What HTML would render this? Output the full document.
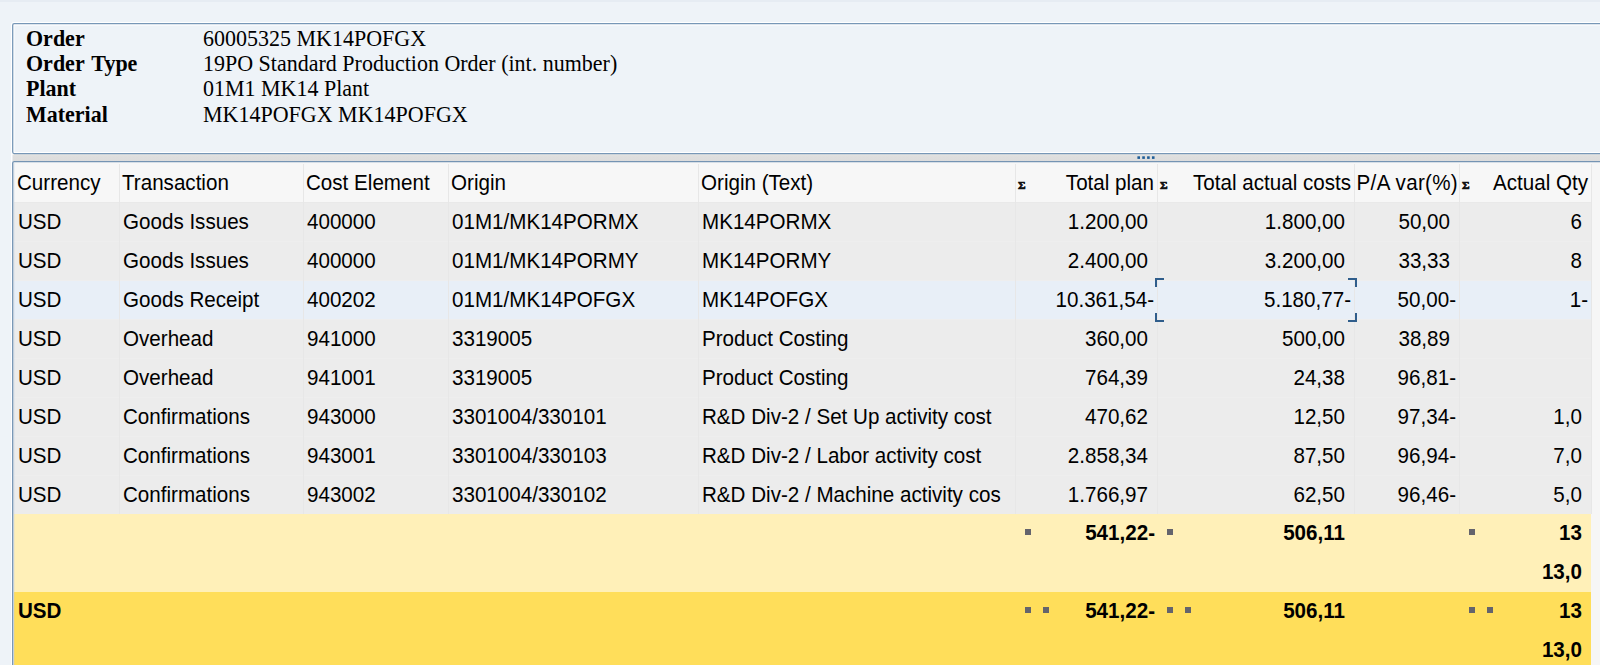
<!DOCTYPE html>
<html><head><meta charset="utf-8"><title>Order</title>
<style>
html,body{margin:0;padding:0}
body{width:1600px;height:665px;overflow:hidden;background:#eef3f8;position:relative;font-family:"Liberation Sans",sans-serif;color:#000}
.abs{position:absolute}
.topstrip{left:0;top:0;width:1600px;height:2px;background:#e6ecf3}
.panel{left:13px;top:24px;width:1600px;height:130px;background:#eef3f8}
.hl{font-family:"Liberation Serif",serif;font-size:22px;line-height:25.4px;white-space:nowrap;transform:scaleY(1.06);transform-origin:0 80%}
.hl b{font-weight:bold;word-spacing:2px}
.split{left:12px;top:154px;width:1600px;height:8px;background:linear-gradient(#e3e2e0 0,#dedede 2px,#dddddd 100%)}
.grid{left:13px;top:162px;width:1600px;height:520px;background:#f7f7f7}
.c{position:absolute;white-space:nowrap;font-size:20.6px;line-height:39px;overflow:hidden;box-sizing:border-box;transform:translateY(0.6px) scaleY(1.045);transform-origin:0 50%}
.r{text-align:right}
.b{font-weight:bold;transform:translateY(-0.4px) scaleY(1.045)}
.row{position:absolute;left:14px;width:1577px;height:39px;background:#ececec}
.vsep{position:absolute;width:1px;background:#e7e7e7}
</style></head><body>
<div class="abs topstrip"></div>
<div class="abs panel"></div>

<div class="abs hl" style="left:26px;top:25.5px"><b>Order</b></div><div class="abs hl" style="left:203px;top:25.5px">60005325 MK14POFGX</div>
<div class="abs hl" style="left:26px;top:50.9px"><b>Order Type</b></div><div class="abs hl" style="left:203px;top:50.9px">19PO Standard Production Order (int. number)</div>
<div class="abs hl" style="left:26px;top:76.3px"><b>Plant</b></div><div class="abs hl" style="left:203px;top:76.3px">01M1 MK14 Plant</div>
<div class="abs hl" style="left:26px;top:101.7px"><b>Material</b></div><div class="abs hl" style="left:203px;top:101.7px">MK14POFGX MK14POFGX</div>
<div class="abs grid"></div>
<div class="abs" style="left:14px;top:162px;width:1586px;height:40px;background:#f7f7f7"></div>
<div class="abs" style="left:14px;top:202px;width:1577px;height:1px;background:#e9e9e9"></div>
<div class="row" style="top:203px;height:38px;background:#ececec"></div>
<div class="abs" style="left:14px;top:241px;width:1577px;height:1px;background:#eeeeee"></div>
<div class="row" style="top:242px;height:38px;background:#ececec"></div>
<div class="abs" style="left:14px;top:280px;width:1577px;height:1px;background:#eeeeee"></div>
<div class="row" style="top:281px;height:38px;background:#e8eff7"></div>
<div class="abs" style="left:14px;top:319px;width:1577px;height:1px;background:#eeeeee"></div>
<div class="row" style="top:320px;height:38px;background:#ececec"></div>
<div class="abs" style="left:14px;top:358px;width:1577px;height:1px;background:#eeeeee"></div>
<div class="row" style="top:359px;height:38px;background:#ececec"></div>
<div class="abs" style="left:14px;top:397px;width:1577px;height:1px;background:#eeeeee"></div>
<div class="row" style="top:398px;height:38px;background:#ececec"></div>
<div class="abs" style="left:14px;top:436px;width:1577px;height:1px;background:#eeeeee"></div>
<div class="row" style="top:437px;height:38px;background:#ececec"></div>
<div class="abs" style="left:14px;top:475px;width:1577px;height:1px;background:#eeeeee"></div>
<div class="row" style="top:476px;height:38px;background:#ececec"></div>
<div class="abs" style="left:1591px;top:162px;width:9px;height:520px;background:#f6f6f6"></div>
<div class="abs" style="left:14px;top:514px;width:1577px;height:78px;background:#fff0b8"></div>
<div class="abs" style="left:14px;top:592px;width:1577px;height:88px;background:#ffde5a"></div>
<div class="vsep" style="left:119px;top:164px;height:350px"></div>
<div class="vsep" style="left:303px;top:164px;height:350px"></div>
<div class="vsep" style="left:448px;top:164px;height:350px"></div>
<div class="vsep" style="left:698px;top:164px;height:350px"></div>
<div class="vsep" style="left:1015px;top:164px;height:350px"></div>
<div class="vsep" style="left:1157px;top:164px;height:350px"></div>
<div class="vsep" style="left:1354px;top:164px;height:350px"></div>
<div class="vsep" style="left:1459px;top:164px;height:350px"></div>
<div class="vsep" style="left:1591px;top:164px;height:350px"></div>
<div class="c" style="left:14px;top:162px;width:105px;padding-left:3px">Currency</div>
<div class="c" style="left:119px;top:162px;width:184px;padding-left:3px">Transaction</div>
<div class="c" style="left:303px;top:162px;width:145px;padding-left:3px">Cost Element</div>
<div class="c" style="left:448px;top:162px;width:250px;padding-left:3px">Origin</div>
<div class="c" style="left:698px;top:162px;width:317px;padding-left:3px">Origin (Text)</div>
<div class="c r" style="left:1015px;top:162px;width:142px;padding-right:3px">Total plan</div>
<div class="c r" style="left:1157px;top:162px;width:197px;padding-right:3px">Total actual costs</div>
<div class="c r" style="left:1354px;top:162px;width:105px;padding-right:1px"><span style="letter-spacing:0.3px">P/A var(%)</span></div>
<div class="c r" style="left:1459px;top:162px;width:132px;padding-right:3px">Actual Qty</div>
<div class="abs" style="left:1018px;top:178px;font-family:'Liberation Serif',serif;font-weight:bold;font-size:10.5px;line-height:16px;color:#111;-webkit-text-stroke:0.65px #111;transform:scaleX(1.1);transform-origin:0 0">&#931;</div>
<div class="abs" style="left:1160px;top:178px;font-family:'Liberation Serif',serif;font-weight:bold;font-size:10.5px;line-height:16px;color:#111;-webkit-text-stroke:0.65px #111;transform:scaleX(1.1);transform-origin:0 0">&#931;</div>
<div class="abs" style="left:1462px;top:178px;font-family:'Liberation Serif',serif;font-weight:bold;font-size:10.5px;line-height:16px;color:#111;-webkit-text-stroke:0.65px #111;transform:scaleX(1.1);transform-origin:0 0">&#931;</div>
<div class="c" style="left:14px;top:201px;width:105px;padding-left:4px">USD</div>
<div class="c" style="left:119px;top:201px;width:184px;padding-left:4px">Goods Issues</div>
<div class="c" style="left:303px;top:201px;width:145px;padding-left:4px">400000</div>
<div class="c" style="left:448px;top:201px;width:250px;padding-left:4px">01M1/MK14PORMX</div>
<div class="c" style="left:698px;top:201px;width:317px;padding-left:4px">MK14PORMX</div>
<div class="c r" style="left:1015px;top:201px;width:142px;padding-right:9px">1.200,00</div>
<div class="c r" style="left:1157px;top:201px;width:197px;padding-right:9px">1.800,00</div>
<div class="c r" style="left:1354px;top:201px;width:105px;padding-right:9px">50,00</div>
<div class="c r" style="left:1459px;top:201px;width:132px;padding-right:9px">6</div>
<div class="c" style="left:14px;top:240px;width:105px;padding-left:4px">USD</div>
<div class="c" style="left:119px;top:240px;width:184px;padding-left:4px">Goods Issues</div>
<div class="c" style="left:303px;top:240px;width:145px;padding-left:4px">400000</div>
<div class="c" style="left:448px;top:240px;width:250px;padding-left:4px">01M1/MK14PORMY</div>
<div class="c" style="left:698px;top:240px;width:317px;padding-left:4px">MK14PORMY</div>
<div class="c r" style="left:1015px;top:240px;width:142px;padding-right:9px">2.400,00</div>
<div class="c r" style="left:1157px;top:240px;width:197px;padding-right:9px">3.200,00</div>
<div class="c r" style="left:1354px;top:240px;width:105px;padding-right:9px">33,33</div>
<div class="c r" style="left:1459px;top:240px;width:132px;padding-right:9px">8</div>
<div class="c" style="left:14px;top:279px;width:105px;padding-left:4px">USD</div>
<div class="c" style="left:119px;top:279px;width:184px;padding-left:4px">Goods Receipt</div>
<div class="c" style="left:303px;top:279px;width:145px;padding-left:4px">400202</div>
<div class="c" style="left:448px;top:279px;width:250px;padding-left:4px">01M1/MK14POFGX</div>
<div class="c" style="left:698px;top:279px;width:317px;padding-left:4px">MK14POFGX</div>
<div class="c r" style="left:1015px;top:279px;width:142px;padding-right:3px">10.361,54-</div>
<div class="c r" style="left:1157px;top:279px;width:197px;padding-right:3px">5.180,77-</div>
<div class="c r" style="left:1354px;top:279px;width:105px;padding-right:3px">50,00-</div>
<div class="c r" style="left:1459px;top:279px;width:132px;padding-right:3px">1-</div>
<div class="c" style="left:14px;top:318px;width:105px;padding-left:4px">USD</div>
<div class="c" style="left:119px;top:318px;width:184px;padding-left:4px">Overhead</div>
<div class="c" style="left:303px;top:318px;width:145px;padding-left:4px">941000</div>
<div class="c" style="left:448px;top:318px;width:250px;padding-left:4px">3319005</div>
<div class="c" style="left:698px;top:318px;width:317px;padding-left:4px">Product Costing</div>
<div class="c r" style="left:1015px;top:318px;width:142px;padding-right:9px">360,00</div>
<div class="c r" style="left:1157px;top:318px;width:197px;padding-right:9px">500,00</div>
<div class="c r" style="left:1354px;top:318px;width:105px;padding-right:9px">38,89</div>
<div class="c" style="left:14px;top:357px;width:105px;padding-left:4px">USD</div>
<div class="c" style="left:119px;top:357px;width:184px;padding-left:4px">Overhead</div>
<div class="c" style="left:303px;top:357px;width:145px;padding-left:4px">941001</div>
<div class="c" style="left:448px;top:357px;width:250px;padding-left:4px">3319005</div>
<div class="c" style="left:698px;top:357px;width:317px;padding-left:4px">Product Costing</div>
<div class="c r" style="left:1015px;top:357px;width:142px;padding-right:9px">764,39</div>
<div class="c r" style="left:1157px;top:357px;width:197px;padding-right:9px">24,38</div>
<div class="c r" style="left:1354px;top:357px;width:105px;padding-right:3px">96,81-</div>
<div class="c" style="left:14px;top:396px;width:105px;padding-left:4px">USD</div>
<div class="c" style="left:119px;top:396px;width:184px;padding-left:4px">Confirmations</div>
<div class="c" style="left:303px;top:396px;width:145px;padding-left:4px">943000</div>
<div class="c" style="left:448px;top:396px;width:250px;padding-left:4px">3301004/330101</div>
<div class="c" style="left:698px;top:396px;width:317px;padding-left:4px">R&amp;D Div-2 / Set Up activity cost</div>
<div class="c r" style="left:1015px;top:396px;width:142px;padding-right:9px">470,62</div>
<div class="c r" style="left:1157px;top:396px;width:197px;padding-right:9px">12,50</div>
<div class="c r" style="left:1354px;top:396px;width:105px;padding-right:3px">97,34-</div>
<div class="c r" style="left:1459px;top:396px;width:132px;padding-right:9px">1,0</div>
<div class="c" style="left:14px;top:435px;width:105px;padding-left:4px">USD</div>
<div class="c" style="left:119px;top:435px;width:184px;padding-left:4px">Confirmations</div>
<div class="c" style="left:303px;top:435px;width:145px;padding-left:4px">943001</div>
<div class="c" style="left:448px;top:435px;width:250px;padding-left:4px">3301004/330103</div>
<div class="c" style="left:698px;top:435px;width:317px;padding-left:4px">R&amp;D Div-2 / Labor activity cost</div>
<div class="c r" style="left:1015px;top:435px;width:142px;padding-right:9px">2.858,34</div>
<div class="c r" style="left:1157px;top:435px;width:197px;padding-right:9px">87,50</div>
<div class="c r" style="left:1354px;top:435px;width:105px;padding-right:3px">96,94-</div>
<div class="c r" style="left:1459px;top:435px;width:132px;padding-right:9px">7,0</div>
<div class="c" style="left:14px;top:474px;width:105px;padding-left:4px">USD</div>
<div class="c" style="left:119px;top:474px;width:184px;padding-left:4px">Confirmations</div>
<div class="c" style="left:303px;top:474px;width:145px;padding-left:4px">943002</div>
<div class="c" style="left:448px;top:474px;width:250px;padding-left:4px">3301004/330102</div>
<div class="c" style="left:698px;top:474px;width:317px;padding-left:4px">R&amp;D Div-2 / Machine activity cos</div>
<div class="c r" style="left:1015px;top:474px;width:142px;padding-right:9px">1.766,97</div>
<div class="c r" style="left:1157px;top:474px;width:197px;padding-right:9px">62,50</div>
<div class="c r" style="left:1354px;top:474px;width:105px;padding-right:3px">96,46-</div>
<div class="c r" style="left:1459px;top:474px;width:132px;padding-right:9px">5,0</div>
<div class="c r b" style="left:1015px;top:513px;width:142px;padding-right:2px">541,22-</div>
<div class="c r b" style="left:1157px;top:513px;width:197px;padding-right:9px">506,11</div>
<div class="c r b" style="left:1459px;top:513px;width:132px;padding-right:9px">13</div>
<div class="c r b" style="left:1459px;top:552px;width:132px;padding-right:9px">13,0</div>
<div class="abs" style="left:1025.0px;top:529px;width:6px;height:6px;background:#64646c"></div>
<div class="abs" style="left:1167.0px;top:529px;width:6px;height:6px;background:#64646c"></div>
<div class="abs" style="left:1469.0px;top:529px;width:6px;height:6px;background:#64646c"></div>
<div class="c r b" style="left:1015px;top:591px;width:142px;padding-right:2px">541,22-</div>
<div class="c r b" style="left:1157px;top:591px;width:197px;padding-right:9px">506,11</div>
<div class="c r b" style="left:1459px;top:591px;width:132px;padding-right:9px">13</div>
<div class="c r b" style="left:1459px;top:630px;width:132px;padding-right:9px">13,0</div>
<div class="abs" style="left:1025.0px;top:607px;width:6px;height:6px;background:#64646c"></div>
<div class="abs" style="left:1043.4px;top:607px;width:6px;height:6px;background:#64646c"></div>
<div class="abs" style="left:1167.0px;top:607px;width:6px;height:6px;background:#64646c"></div>
<div class="abs" style="left:1185.4px;top:607px;width:6px;height:6px;background:#64646c"></div>
<div class="abs" style="left:1469.0px;top:607px;width:6px;height:6px;background:#64646c"></div>
<div class="abs" style="left:1487.4px;top:607px;width:6px;height:6px;background:#64646c"></div>
<div class="c b" style="left:14px;top:591px;width:105px;padding-left:4px">USD</div>
<svg class="abs" style="left:0;top:0" width="1600" height="665" viewBox="0 0 1600 665">
<defs><linearGradient id="sg" x1="0" y1="0" x2="0" y2="1"><stop offset="0" stop-color="#e5e4e1"/><stop offset="0.35" stop-color="#dedede"/><stop offset="1" stop-color="#dcdcdc"/></linearGradient></defs>
<path d="M1610,23.7 H14.2 Q12.7,23.7 12.7,25.2 V152.1 Q12.7,153.6 14.2,153.6 H1610" fill="none" stroke="#ffffff" stroke-width="3.4"/>
<rect x="11" y="150" width="1.1" height="520" fill="#ffffff" fill-opacity="0.9"/>
<rect x="12.7" y="154.2" width="1600" height="7" fill="url(#sg)"/>
<path d="M1610,23.7 H14.2 Q12.7,23.7 12.7,25.2 V152.1 Q12.7,153.6 14.2,153.6 H1610" fill="none" stroke="#7797b7" stroke-width="1.3"/>
<path d="M1610,161.6 H14.2 Q12.7,161.6 12.7,163.1 V670" fill="none" stroke="#7594b3" stroke-width="1.3"/>
<rect x="13.35" y="163" width="0.9" height="510" fill="#b9c9da" fill-opacity="0.7"/>
</svg>
<svg class="abs" style="left:0;top:150px" width="1600" height="14" viewBox="0 150 1600 14"><rect x="1137.40" y="156.3" width="2.6" height="2.6" fill="#1f5d97"/><rect x="1142.25" y="156.3" width="2.6" height="2.6" fill="#1f5d97"/><rect x="1147.10" y="156.3" width="2.6" height="2.6" fill="#1f5d97"/><rect x="1151.95" y="156.3" width="2.6" height="2.6" fill="#1f5d97"/></svg>
<div class="abs" style="left:1155px;top:278px;width:9px;height:2px;background:#2f5d8b"></div>
<div class="abs" style="left:1155px;top:278px;width:2px;height:9px;background:#2f5d8b"></div>
<div class="abs" style="left:1348px;top:278px;width:9px;height:2px;background:#2f5d8b"></div>
<div class="abs" style="left:1355px;top:278px;width:2px;height:9px;background:#2f5d8b"></div>
<div class="abs" style="left:1155px;top:320px;width:9px;height:2px;background:#2f5d8b"></div>
<div class="abs" style="left:1155px;top:313px;width:2px;height:9px;background:#2f5d8b"></div>
<div class="abs" style="left:1348px;top:320px;width:9px;height:2px;background:#2f5d8b"></div>
<div class="abs" style="left:1355px;top:313px;width:2px;height:9px;background:#2f5d8b"></div>
</body></html>
